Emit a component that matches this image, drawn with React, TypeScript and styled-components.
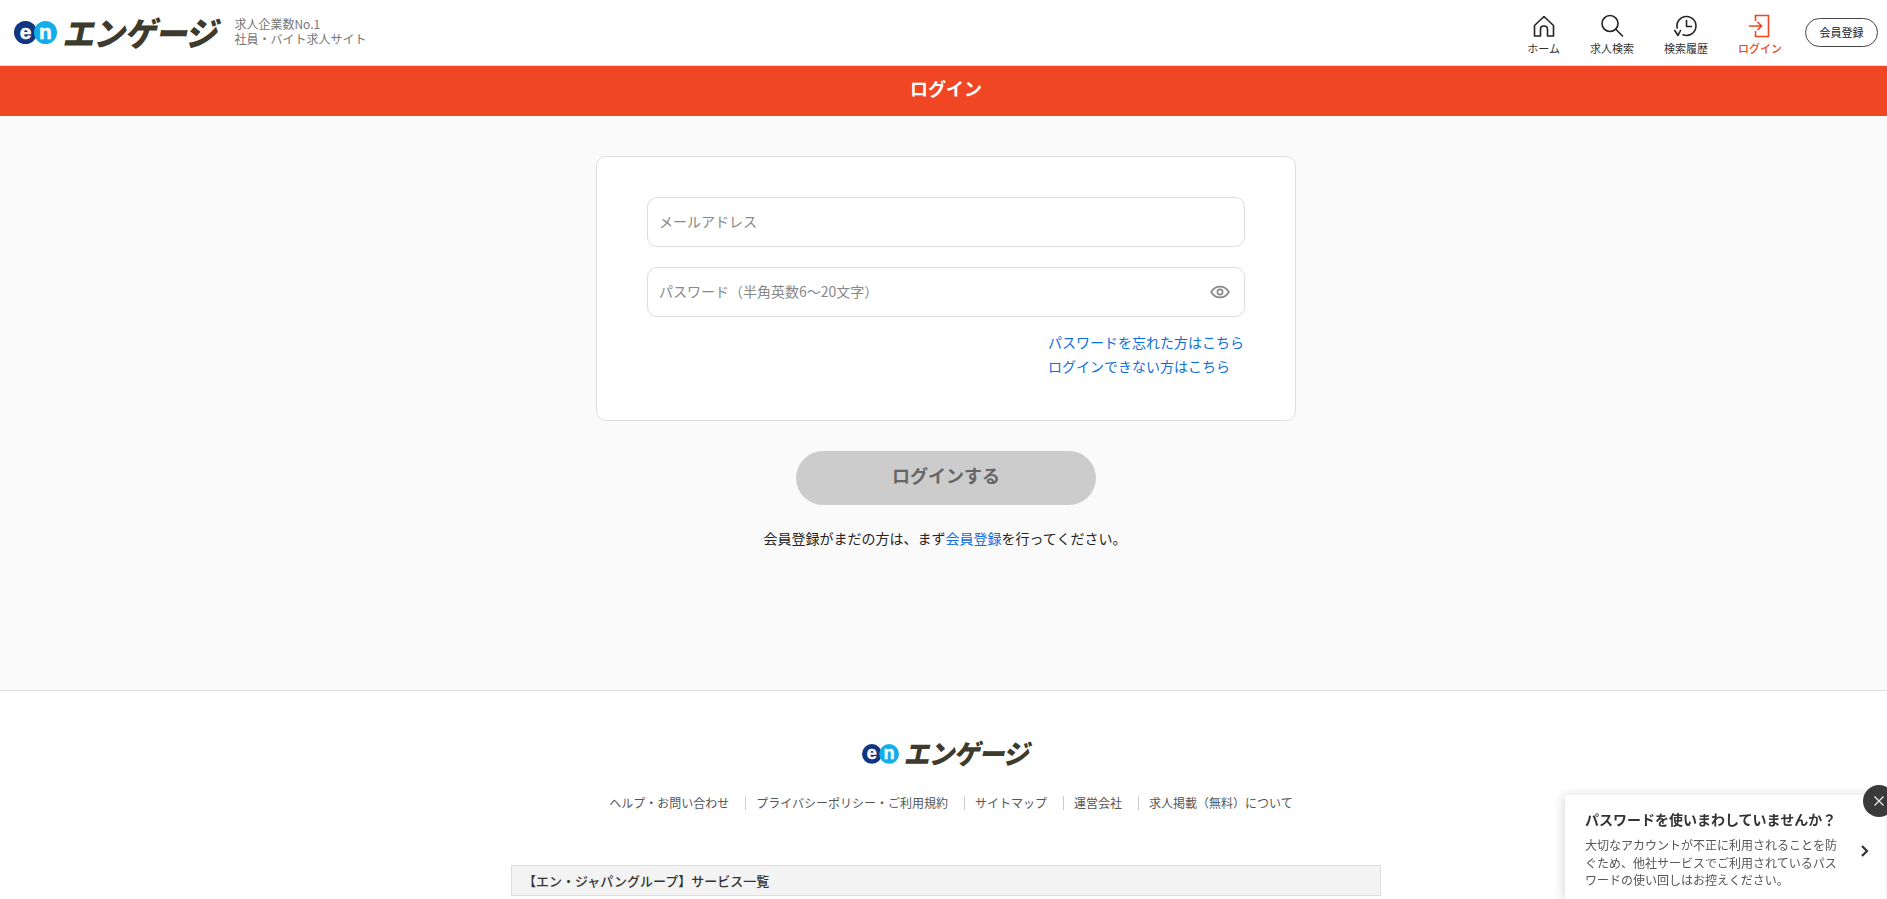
import React from "react";
import styled, { createGlobalStyle } from "styled-components";

const Global = createGlobalStyle`
  html, body { margin: 0; padding: 0; height: 899px; overflow: hidden; background: #fff; }
  body { font-family: "Noto Sans CJK JP", "Noto Sans", sans-serif; color: #222; }
  * { box-sizing: border-box; }
`;

const Page = styled.div`
  display: flex;
  flex-direction: column;
  height: 899px;
  overflow: hidden;
`;

const Header = styled.header`
  height: 66px;
  flex: none;
  display: flex;
  align-items: center;
  justify-content: space-between;
  padding: 0 9px 0 14px;
  background: #fff;
  border-bottom: 1px solid #ddd;
`;

const Brand = styled.div`
  display: flex;
  align-items: center;
`;

const LogoLink = styled.a<{ $gap: number }>`
  display: flex;
  align-items: center;
  gap: ${(p) => p.$gap}px;
`;

const LogoWord = styled.span<{ $size: number; $lift: number }>`
  display: inline-block;
  margin-top: ${(p) => -p.$lift}px;
  font-family: "Noto Sans CJK JP", sans-serif;
  font-weight: 900;
  font-size: ${(p) => p.$size}px;
  line-height: 1;
  letter-spacing: ${(p) => Math.round(p.$size * -0.03)}px;
  color: #3d3a2e;
  transform: skewX(-12deg) scaleY(1.04);
  white-space: nowrap;
`;

const Tagline = styled.div`
  margin: 0 0 4px 15px;
  font-size: 12px;
  line-height: 15px;
  color: #777;
`;

const Nav = styled.nav`
  display: flex;
  align-items: center;
  gap: 30px;
`;

const NavItem = styled.a<{ $active?: boolean }>`
  display: flex;
  flex-direction: column;
  align-items: center;
  gap: 2px;
  padding-top: 5px;
  font-size: 11px;
  line-height: 16px;
  color: ${(p) => (p.$active ? "#f04623" : "#333")};
  font-weight: ${(p) => (p.$active ? 500 : 400)};
`;

const RegisterButton = styled.a`
  margin-left: -7px;
  width: 73px;
  height: 29px;
  display: flex;
  align-items: center;
  justify-content: center;
  padding-bottom: 2px;
  border: 1px solid #444;
  border-radius: 15px;
  font-size: 11px;
  color: #222;
  background: #fff;
`;

const TitleBar = styled.div`
  height: 50px;
  flex: none;
  display: flex;
  align-items: center;
  justify-content: center;
  padding: 0 0 6px 5px;
  background: #f04623;
  color: #fff;
  font-size: 18px;
  font-weight: 700;
`;

const Main = styled.main`
  height: 575px;
  flex: none;
  display: flex;
  flex-direction: column;
  align-items: center;
  padding: 40px 0 0 5px;
  background: #fafafa;
  border-bottom: 1px solid #ddd;
`;

const Card = styled.section`
  width: 700px;
  height: 265px;
  padding: 40px 50px 0;
  background: #fff;
  border: 1px solid #ddd;
  border-radius: 10px;
  display: flex;
  flex-direction: column;
  gap: 20px;
`;

const Field = styled.div`
  height: 50px;
  flex: none;
  display: flex;
  align-items: center;
  justify-content: space-between;
  padding: 0 14px 0 11px;
  border: 1px solid #ddd;
  border-radius: 10px;
  background: #fff;
`;

const Input = styled.input`
  flex: 1;
  border: 0;
  outline: 0;
  background: transparent;
  padding: 0 0 3px;
  font: 400 14px "Noto Sans CJK JP", sans-serif;
  color: #222;
  &::placeholder { color: #888; opacity: 1; }
`;

const Links = styled.div`
  align-self: flex-end;
  width: 197px;
  margin-top: -7px;
  display: flex;
  flex-direction: column;
  font-size: 14px;
  line-height: 24px;
`;

const BlueLink = styled.a`
  color: #0d6fdc;
  white-space: nowrap;
`;

const SubmitButton = styled.button`
  width: 300px;
  height: 54px;
  margin-top: 30px;
  padding: 0 0 6px;
  border: 0;
  border-radius: 27px;
  background: #ccc;
  color: #666;
  font: 700 18px "Noto Sans CJK JP", sans-serif;
`;

const SignupNote = styled.p`
  margin: 22px 0 0 -2px;
  font-size: 14px;
  line-height: 22px;
  color: #222;
`;

const Footer = styled.footer`
  flex: 1;
  display: flex;
  flex-direction: column;
  align-items: center;
  background: #fff;
  padding: 51px 0 0 5px;
`;

const FooterLinks = styled.ul`
  list-style: none;
  display: flex;
  margin: 30px 0 0;
  padding: 0 0 0 10px;
  font-size: 12px;
  line-height: 14px;
  color: #555;
`;

const FooterLink = styled.li`
  padding: 0 16px 0 10px;
  border-right: 1px solid #ccc;
  white-space: nowrap;
  &:last-child { border-right: 0; padding-right: 0; }
  &:first-child { padding-left: 0; }
`;

const ServiceBar = styled.div`
  width: 870px;
  height: 31px;
  margin-top: 55px;
  flex: none;
  display: flex;
  align-items: center;
  padding-left: 11px;
  background: #f3f3f3;
  border: 1px solid #ddd;
  font-size: 13px;
  font-weight: 500;
  color: #333;
`;

const Popup = styled.aside`
  position: fixed;
  left: 1565px;
  top: 795px;
  width: 320px;
  height: 104px;
  padding: 14px 46px 0 20px;
  background: #fff;
  box-shadow: -2px 0 10px rgba(0, 0, 0, 0.14);
`;

const PopupTitle = styled.div`
  font-size: 14px;
  font-weight: 700;
  line-height: 20px;
  color: #333;
  white-space: nowrap;
`;

const PopupBody = styled.div`
  margin-top: 7px;
  font-size: 12px;
  line-height: 17.5px;
  color: #555;
`;

const PopupArrow = styled.span`
  position: absolute;
  right: 15px;
  top: 49px;
  display: flex;
`;

const PopupClose = styled.button`
  position: absolute;
  left: 298px;
  top: -10px;
  width: 32px;
  height: 32px;
  border: 0;
  padding: 0;
  border-radius: 50%;
  background: #3a3a3a;
  display: flex;
  align-items: center;
  justify-content: center;
`;

const IconFrame = styled.svg`
  display: block;
  flex: none;
`;

function EnMark({ width }: { width: number }) {
  return (
    <IconFrame width={width} height={(width * 23) / 43} viewBox="0 0 43 23">
      <circle cx="11.5" cy="11.5" r="11.5" fill="#12357f" />
      <circle cx="31.5" cy="11.5" r="11.5" fill="#12aeea" />
      <text x="11.5" y="18" textAnchor="middle" fontFamily="'Liberation Sans', sans-serif" fontWeight="700" fontSize="21" fill="#fff" stroke="#fff" strokeWidth="0.5">e</text>
      <text x="31.5" y="18" textAnchor="middle" fontFamily="'Liberation Sans', sans-serif" fontWeight="700" fontSize="21" fill="#fff" stroke="#fff" strokeWidth="0.5">n</text>
    </IconFrame>
  );
}

const stroke = { fill: "none", stroke: "#222", strokeWidth: 1.6, strokeLinecap: "round" as const, strokeLinejoin: "round" as const };

function HomeIcon() {
  return (
    <IconFrame width="24" height="24" viewBox="0 0 24 24">
      <path {...stroke} d="M2.5 11.5 12 2.5l9.5 9v10.5h-6v-7a3 3 0 0 0-3-3h-1a3 3 0 0 0-3 3v7h-6z" />
    </IconFrame>
  );
}

function SearchIcon() {
  return (
    <IconFrame width="24" height="24" viewBox="0 0 24 24">
      <circle {...stroke} cx="10" cy="9.5" r="8" />
      <path {...stroke} d="M15.8 15.3 22.5 22" />
    </IconFrame>
  );
}

function HistoryIcon() {
  return (
    <IconFrame width="24" height="24" viewBox="0 0 24 24">
      <path {...stroke} d="M3.2 14A9.5 9.5 0 1 1 9 20.8" />
      <path {...stroke} d="M0.8 16.5 4 21.5l2.5-5" />
      <path {...stroke} d="M12.5 6.5v6h5" />
    </IconFrame>
  );
}

function LoginIcon() {
  return (
    <IconFrame width="24" height="24" viewBox="0 0 24 24">
      <path fill="none" stroke="#f04623" strokeWidth="1.6" d="M7.5 7V1.5h13v21h-13V17" />
      <path fill="none" stroke="#f04623" strokeWidth="1.6" d="M1 12h12M9.5 8l4 4-4 4" />
    </IconFrame>
  );
}

function EyeIcon() {
  return (
    <IconFrame width="20" height="20" viewBox="0 0 20 20">
      <path fill="none" stroke="#888" strokeWidth="1.7" d="M1.2 10C3.2 6.4 6.3 4.6 10 4.6s6.8 1.8 8.8 5.4c-2 3.6-5.1 5.4-8.8 5.4S3.2 13.6 1.2 10z" />
      <circle fill="none" stroke="#888" strokeWidth="1.7" cx="10" cy="10" r="2.6" />
    </IconFrame>
  );
}

function ChevronIcon() {
  return (
    <IconFrame width="10" height="14" viewBox="0 0 10 14">
      <path fill="none" stroke="#333" strokeWidth="2.2" d="M2 2l5 5-5 5" />
    </IconFrame>
  );
}

function CloseIcon() {
  return (
    <IconFrame width="12" height="12" viewBox="0 0 12 12">
      <path fill="none" stroke="#eee" strokeWidth="1.2" d="M1.5 1.5l9 9M10.5 1.5l-9 9" />
    </IconFrame>
  );
}

export default function App() {
  return (
    <Page>
      <Global />
      <Header>
        <Brand>
          <LogoLink $gap={8}>
            <EnMark width={43} />
            <LogoWord $size={32} $lift={4}>エンゲージ</LogoWord>
          </LogoLink>
          <Tagline>
            求人企業数No.1
            <br />
            社員・バイト求人サイト
          </Tagline>
        </Brand>
        <Nav>
          <NavItem><HomeIcon />ホーム</NavItem>
          <NavItem><SearchIcon />求人検索</NavItem>
          <NavItem><HistoryIcon />検索履歴</NavItem>
          <NavItem $active><LoginIcon />ログイン</NavItem>
          <RegisterButton>会員登録</RegisterButton>
        </Nav>
      </Header>
      <TitleBar>ログイン</TitleBar>
      <Main>
        <Card>
          <Field>
            <Input placeholder="メールアドレス" />
          </Field>
          <Field>
            <Input placeholder="パスワード（半角英数6〜20文字）" />
            <EyeIcon />
          </Field>
          <Links>
            <BlueLink>パスワードを忘れた方はこちら</BlueLink>
            <BlueLink>ログインできない方はこちら</BlueLink>
          </Links>
        </Card>
        <SubmitButton>ログインする</SubmitButton>
        <SignupNote>
          会員登録がまだの方は、まず<BlueLink>会員登録</BlueLink>を行ってください。
        </SignupNote>
      </Main>
      <Footer>
        <LogoLink $gap={7}>
          <EnMark width={37} />
          <LogoWord $size={26} $lift={2}>エンゲージ</LogoWord>
        </LogoLink>
        <FooterLinks>
          <FooterLink>ヘルプ・お問い合わせ</FooterLink>
          <FooterLink>プライバシーポリシー・ご利用規約</FooterLink>
          <FooterLink>サイトマップ</FooterLink>
          <FooterLink>運営会社</FooterLink>
          <FooterLink>求人掲載（無料）について</FooterLink>
        </FooterLinks>
        <ServiceBar>【エン・ジャパングループ】サービス一覧</ServiceBar>
      </Footer>
      <Popup>
        <PopupTitle>パスワードを使いまわしていませんか？</PopupTitle>
        <PopupBody>大切なアカウントが不正に利用されることを防ぐため、他社サービスでご利用されているパスワードの使い回しはお控えください。</PopupBody>
        <PopupArrow><ChevronIcon /></PopupArrow>
        <PopupClose><CloseIcon /></PopupClose>
      </Popup>
    </Page>
  );
}
